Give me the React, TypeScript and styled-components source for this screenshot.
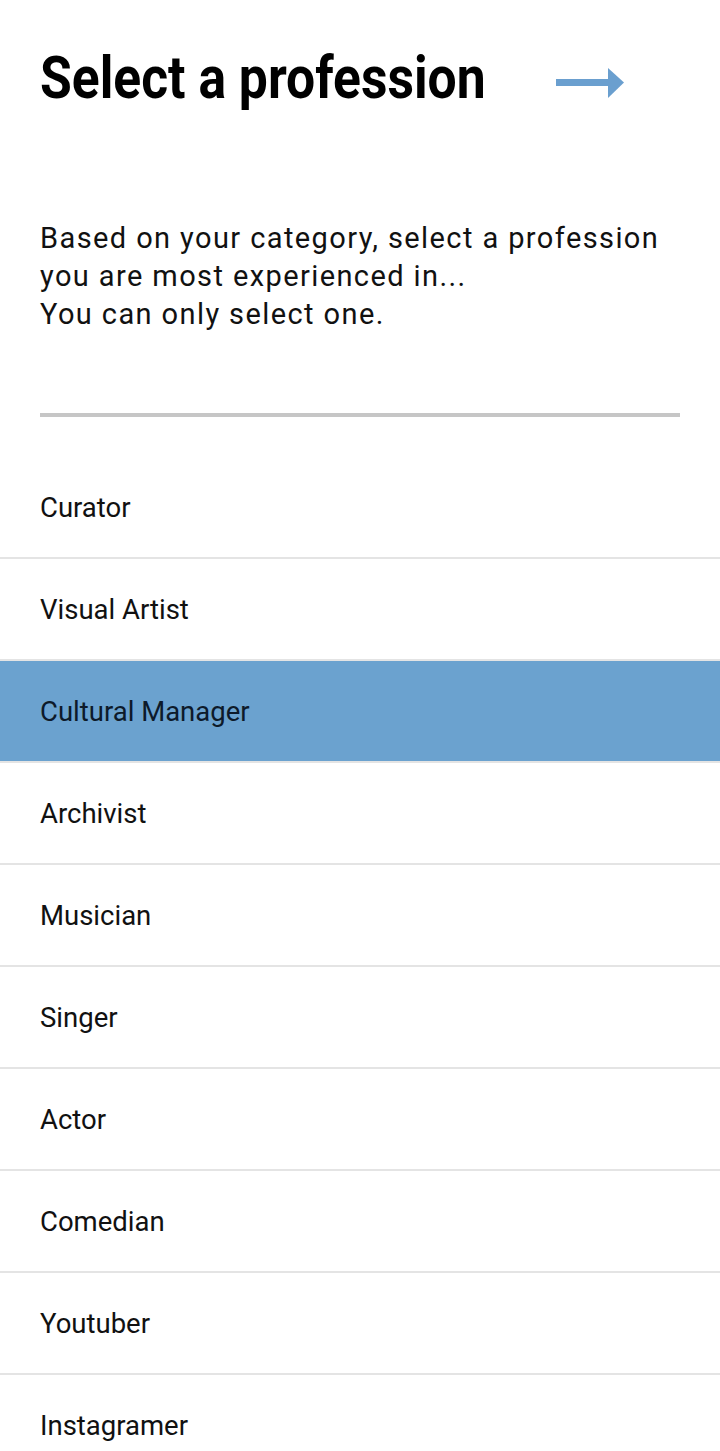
import React, { useState } from "react";
import styled, { createGlobalStyle } from "styled-components";

const professions = [
  "Curator",
  "Visual Artist",
  "Cultural Manager",
  "Archivist",
  "Musician",
  "Singer",
  "Actor",
  "Comedian",
  "Youtuber",
  "Instagramer",
];

const App = () => {
  const [selected, setSelected] = useState("Cultural Manager");

  return (
    <>
      <GlobalStyle />
      <Page>
        <Header>
          <Title>Select a profession</Title>
          <NextButton aria-label="Next">
            <svg width="68" height="32" viewBox="0 0 68 32">
              <rect x="0" y="12" width="53" height="7" fill="#6a9fcf" />
              <polygon points="52,1 68,15.5 52,31" fill="#6a9fcf" />
            </svg>
          </NextButton>
        </Header>
        <Description>
          Based on your category, select a profession
          <br />
          you are most experienced in...
          <br />
          You can only select one.
        </Description>
        <Divider />
        <List>
          {professions.map((p) => (
            <Item key={p} active={p === selected} onClick={() => setSelected(p)}>
              {p}
            </Item>
          ))}
        </List>
      </Page>
    </>
  );
};

export default App;

const GlobalStyle = createGlobalStyle`
  body {
    margin: 0;
    background: #ffffff;
    font-family: Roboto, "Noto Sans", sans-serif;
  }
`;

const Page = styled.div`
  width: 720px;
  overflow: hidden;
`;

const Header = styled.div`
  display: flex;
  align-items: center;
  padding: 33px 40px 0 40px;
  height: 89px;
`;

const Title = styled.h1`
  margin: 0;
  width: 516px;
  font-size: 59px;
  font-weight: 700;
  color: #000;
  white-space: nowrap;
  transform: scaleX(0.875);
  transform-origin: left center;
`;

const NextButton = styled.div`
  display: flex;
  align-items: center;
  margin-top: 11px;
  cursor: pointer;
`;

const Description = styled.p`
  margin: 97px 40px 0 40px;
  font-size: 29px;
  line-height: 38px;
  letter-spacing: 1.4px;
  color: #111;
`;

const Divider = styled.div`
  margin: 80px 40px 0 40px;
  height: 4px;
  background: #c6c6c6;
`;

const List = styled.div`
  margin-top: 40px;
  display: flex;
  flex-direction: column;
`;

const Item = styled.div<{ active?: boolean }>`
  display: flex;
  align-items: center;
  height: 100px;
  padding-left: 40px;
  border-bottom: 2px solid #e4e4e4;
  background: ${(p) => (p.active ? "#6ba2cf" : "#fff")};
  color: ${(p) => (p.active ? "#0d1a2a" : "#111")};
  font-size: 27.5px;
  cursor: pointer;
`;
